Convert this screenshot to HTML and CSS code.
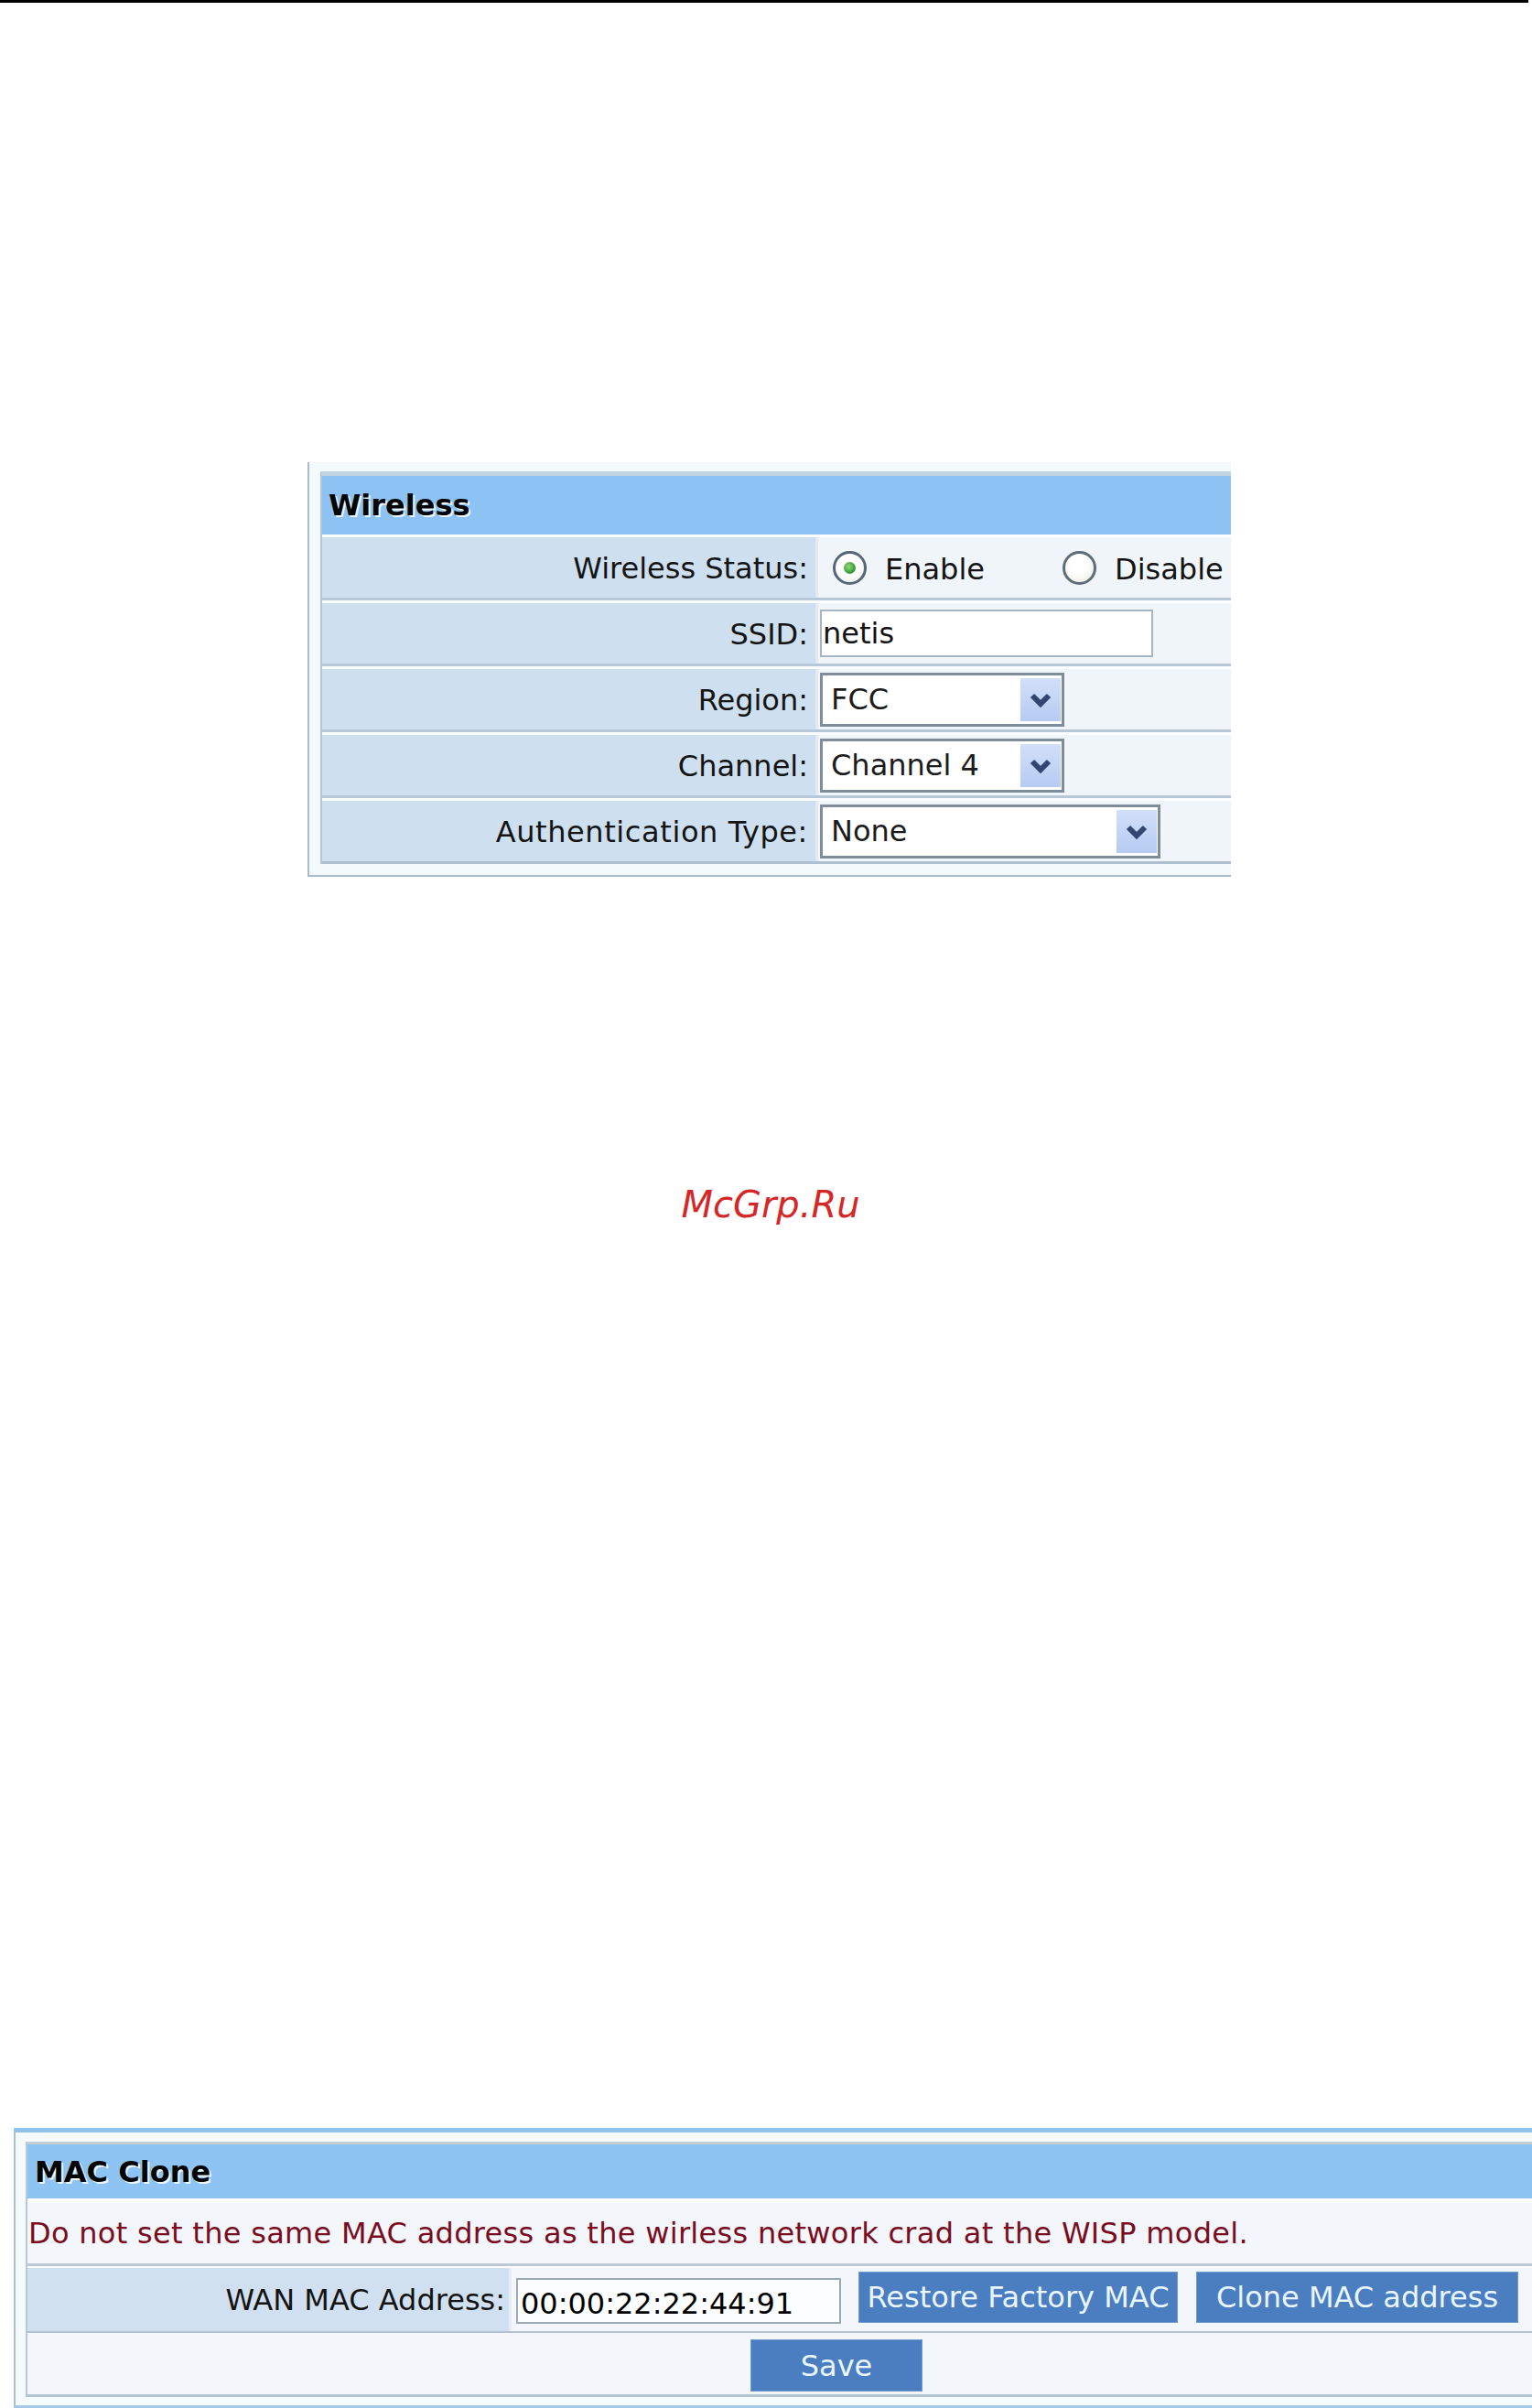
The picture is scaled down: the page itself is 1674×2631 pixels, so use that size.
FILE: index.html
```html
<!DOCTYPE html>
<html lang="en">
<head>
<meta charset="utf-8">
<title>Wireless / MAC Clone</title>
<link rel="stylesheet" href="styles.css">
</head>
<body>
<div class="page">
  <div class="topline"></div>

  <section class="wl-panel">
    <div class="wl-table">
      <div class="hdr">Wireless</div>
      <div class="row">
        <div class="lbl">Wireless Status:</div>
        <div class="val">
          <span class="radio radio-on"><span class="dot"></span></span><span class="rtext">Enable</span>
          <span class="radio radio-off"></span><span class="rtext">Disable</span>
        </div>
      </div>
      <div class="row">
        <div class="lbl">SSID:</div>
        <div class="val"><span class="textbox ssid">netis</span></div>
      </div>
      <div class="row">
        <div class="lbl">Region:</div>
        <div class="val">
          <span class="sel">FCC<span class="arrow"><svg viewBox="0 0 44 47" width="44" height="47"><polyline points="13,19 22,28 31,19" fill="none" stroke="#32466f" stroke-width="6"/></svg></span></span>
        </div>
      </div>
      <div class="row">
        <div class="lbl">Channel:</div>
        <div class="val">
          <span class="sel">Channel 4<span class="arrow"><svg viewBox="0 0 44 47" width="44" height="47"><polyline points="13,19 22,28 31,19" fill="none" stroke="#32466f" stroke-width="6"/></svg></span></span>
        </div>
      </div>
      <div class="row row-last">
        <div class="lbl lbl-auth">Authentication Type:</div>
        <div class="val">
          <span class="sel sel-wide">None<span class="arrow"><svg viewBox="0 0 44 47" width="44" height="47"><polyline points="13,19 22,28 31,19" fill="none" stroke="#32466f" stroke-width="6"/></svg></span></span>
        </div>
      </div>
    </div>
  </section>

  <div class="wm">McGrp.Ru</div>

  <section class="mac-panel">
    <div class="mac-table">
      <div class="hdr mac-hdr">MAC Clone</div>
      <div class="msg">Do not set the same MAC address as the wirless network crad at the WISP model.</div>
      <div class="mac-row">
        <div class="mac-lbl">WAN MAC Address:</div>
        <div class="mac-val">
          <span class="mac-input">00:00:22:22:44:91</span>
          <span class="btn btn-restore">Restore Factory MAC</span>
          <span class="btn btn-clone">Clone MAC address</span>
        </div>
      </div>
      <div class="save-row"><span class="btn btn-save">Save</span></div>
    </div>
  </section>
</div>
</body>
</html>
```

FILE: styles.css
```css
html, body {
  margin: 0;
  padding: 0;
  background: #ffffff;
}

body {
  font-family: "DejaVu Sans", Verdana, sans-serif;
  font-size: 32px;
  color: #141414;
}

.page {
  width: 1674px;
  height: 2631px;
  overflow: hidden;
}

.topline {
  width: 1670px;
  height: 3px;
  background: #000;
}

/* ---------- Wireless panel ---------- */
.wl-panel {
  margin: 502px 0 0 336px;
  width: 1009px;
  box-sizing: border-box;
  background: #f4fafb;
  border-left: 2px solid #a9bccb;
  border-bottom: 2px solid #a9bccb;
  padding: 10px 0 12px 12px;
  overflow: hidden;
}

.wl-table {
  border-top: 5px solid #c2d3e3;
  border-left: 2px solid #b3c4d4;
}

.hdr {
  height: 64px;
  background: #8cc3f4;
  display: flex;
  align-items: center;
  padding-left: 7px;
  font-weight: bold;
  color: #050505;
  text-shadow: 2px 2px 0 rgba(255, 255, 255, 0.85);
}

.row {
  display: flex;
  height: 66px;
  border-top: 3px solid #fbfdfe;
  border-bottom: 3px solid #b6c7d7;
}

.row-last {
  border-bottom-color: #aebfd0;
}

.lbl {
  width: 542px;
  flex: none;
  box-sizing: border-box;
  background: #cedfef;
  display: flex;
  align-items: center;
  justify-content: flex-end;
  padding-right: 8px;
  padding-top: 2px;
  border-right: 3px solid #e2ebf3;
}

.lbl-auth {
  letter-spacing: 0.6px;
}

.val {
  flex: 1;
  background: #f0f5fa;
  display: flex;
  align-items: center;
  padding-left: 2px;
}

.radio {
  width: 37px;
  height: 37px;
  flex: none;
  box-sizing: border-box;
  border-radius: 50%;
  border: 3px solid #56677a;
  background: radial-gradient(circle at 45% 40%, #ffffff 45%, #e3e6e2 100%);
  display: inline-flex;
  align-items: center;
  justify-content: center;
}

.radio-on {
  margin-left: 14px;
}

.radio-off {
  margin-left: 85px;
  border-color: #5f6c79;
  background: radial-gradient(circle at 45% 40%, #ffffff 35%, #e8e8dc 100%);
}

.dot {
  width: 13px;
  height: 13px;
  border-radius: 50%;
  background: radial-gradient(circle at 40% 40%, #8fdc7c 0%, #3f9d3b 60%, #2a7a2a 100%);
}

.rtext {
  margin-left: 20px;
  padding-top: 3px;
}

.textbox {
  box-sizing: border-box;
  height: 52px;
  background: #ffffff;
  border: 2px solid #a7b5c3;
  display: flex;
  align-items: center;
  padding-left: 1px;
}

.ssid {
  width: 364px;
}

.sel {
  width: 267px;
  height: 59px;
  box-sizing: border-box;
  background: #ffffff;
  border: 3px solid #7f8d9b;
  display: flex;
  align-items: center;
  padding-left: 9px;
  color: #1c1c1c;
}

.sel-wide {
  width: 372px;
}

.arrow {
  margin-left: auto;
  margin-right: 1px;
  width: 44px;
  height: 47px;
  flex: none;
  background: linear-gradient(#d2dff9, #b6cbf2);
  display: block;
}

.arrow svg {
  display: block;
}

/* ---------- watermark ---------- */
.wm {
  margin-top: 334px;
  height: 48px;
  line-height: 48px;
  text-align: center;
  padding-left: 10px;
  font-size: 40px;
  font-style: oblique;
  color: #d42828;
}

/* ---------- MAC Clone panel ---------- */
.mac-panel {
  margin: 985px 0 0 15px;
  width: 1700px;
  box-sizing: border-box;
  background: #f5fbfc;
  border-left: 2px solid #a9c0d2;
  border-top: 5px solid #8fc3ec;
  border-bottom: 3px solid #a6c8e4;
  padding: 10px 0 9px 11px;
}

.mac-table {
  border-top: 3px solid #c4ccd4;
  border-left: 2px solid #b8c8d8;
}

.mac-hdr {
  height: 59px;
  padding-left: 8px;
  background: #8ec4f4;
}

.msg {
  height: 66px;
  border-top: 5px solid #fbfdfe;
  border-bottom: 3px solid #bcc9d5;
  background: #f3f7fb;
  color: #7a0c1e;
  display: flex;
  align-items: center;
  padding-left: 1px;
  letter-spacing: 0.3px;
}

.mac-row {
  display: flex;
  height: 69px;
  border-top: 2px solid #fbfdfe;
  border-bottom: 2px solid #b4c2cf;
}

.mac-lbl {
  width: 529px;
  flex: none;
  box-sizing: border-box;
  background: #d0e0f0;
  display: flex;
  align-items: center;
  justify-content: flex-end;
  padding-right: 4px;
  border-right: 3px solid #e4ecf4;
}

.mac-val {
  flex: 1;
  background: #f3f7fb;
  display: flex;
  align-items: flex-start;
  padding-left: 5px;
}

.mac-input {
  margin-top: 11px;
  width: 355px;
  height: 50px;
  box-sizing: border-box;
  border: 2px solid #9ba9b7;
  background: #fbfdfe;
  display: flex;
  align-items: center;
  padding: 6px 0 0 3px;
  color: #000;
}

.btn {
  box-sizing: border-box;
  height: 56px;
  background: #4a7ec0;
  border: 1px solid #6d9bd2;
  color: #eaf6ff;
  display: flex;
  align-items: center;
  justify-content: center;
  white-space: nowrap;
}

.btn-restore {
  margin: 4px 0 0 19px;
  width: 349px;
}

.btn-clone {
  margin: 4px 0 0 20px;
  width: 352px;
}

.save-row {
  height: 67px;
  border-bottom: 3px solid #b4c4d2;
  background: #f3f7fb;
  display: flex;
  align-items: flex-start;
  padding-left: 790px;
}

.btn-save {
  margin-top: 7px;
  width: 188px;
  height: 57px;
}
```
